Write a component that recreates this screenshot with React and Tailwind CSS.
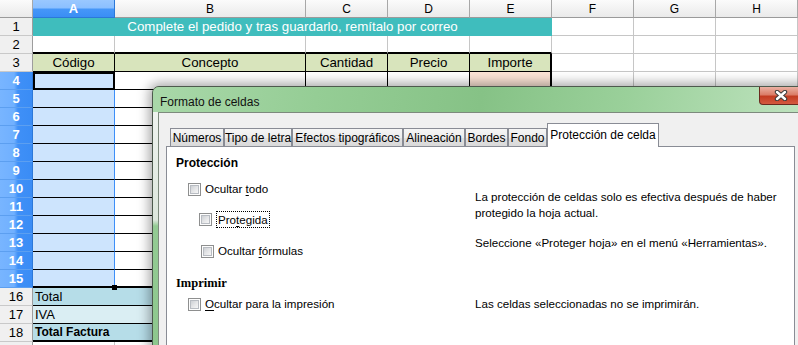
import React from 'react';

const grid = 'h-full shrink-0 border-r border-b border-[#c6c6c6] bg-white';
const g82 = 'w-[82px] ' + grid;
const g191 = 'w-[191px] ' + grid;
const hdrCell = 'w-[82px] h-full shrink-0 flex items-center justify-center border-r border-b border-r-[#a8a8a8] border-b-[#9a9a9a] bg-[linear-gradient(to_bottom,#fbfbfb,#eaeaea)]';

function RowNum({ n, on }) {
  if (on) {
    return (
      <div className="w-[33px] h-full shrink-0 flex items-center justify-center border-r border-b border-r-[#2c78d8] border-b-[#5c9ff0] bg-[linear-gradient(to_right,#78b5ff_0%,#70b0ff_44%,#3f90f7_56%,#3a8cf5_100%)] text-white font-bold text-[13px]">
        {n}
      </div>
    );
  }
  return (
    <div className="w-[33px] h-full shrink-0 flex items-center justify-center border-r border-b border-r-[#9d9d9d] border-b-[#c9c9c9] bg-[#f0f0f0] text-[13px] text-black">
      {n}
    </div>
  );
}

function Tail() {
  return (
    <>
      <div className={g82} />
      <div className={g82} />
      <div className={g82} />
    </>
  );
}

function SelRow({ n, last }) {
  const a = last
    ? 'w-[82px] h-full shrink-0 bg-[#cde4fd] border-r border-r-[#3d8ff8] border-b-2 border-b-black'
    : 'w-[82px] h-full shrink-0 bg-[#cde4fd] border-r border-r-[#3d8ff8] border-b border-b-black';
  const b = last
    ? 'w-[191px] h-full shrink-0 bg-white border-r border-r-[#c6c6c6] border-b-2 border-b-black'
    : 'w-[191px] h-full shrink-0 bg-white border-r border-r-[#c6c6c6] border-b border-b-black';
  return (
    <div className="flex h-[18px]">
      <RowNum n={n} on />
      <div className={a} />
      <div className={b} />
      <div className={g82} />
      <div className={g82} />
      <div className={g82} />
      <Tail />
    </div>
  );
}

function Check() {
  return (
    <span className="w-[13px] h-[13px] shrink-0 flex border border-[#8e8f8f] bg-[#fdfdfd] p-[1px]">
      <span className="flex-1 border border-[#b8bcc2] bg-[linear-gradient(135deg,#cdd0d4_0%,#e4e5e7_50%,#f6f6f6_100%)]" />
    </span>
  );
}

function TabBtn({ w, children }) {
  return (
    <div className={w + ' h-[19px] shrink-0 flex items-center justify-center border border-b-0 border-[#898c95] bg-[linear-gradient(to_bottom,#f5f5f5_0%,#ececec_50%,#e0e0e0_51%,#d9d9d9_100%)] whitespace-nowrap text-[12px] text-black leading-none'}>
      {children}
    </div>
  );
}

export default function App() {
  return (
    <div className="relative w-[798px] h-[345px] overflow-hidden bg-white font-['Liberation_Sans',Arial,sans-serif] text-black">
      {/* hoja de cálculo */}
      <div className="flex flex-col">
        <div className="flex h-[18px] text-[12px]">
          <div className="w-[33px] h-full shrink-0 border-r border-b border-r-[#a8a8a8] border-b-[#9a9a9a] bg-[linear-gradient(to_bottom,#fbfbfb,#eaeaea)]" />
          <div className="w-[82px] h-full shrink-0 flex items-center justify-center border-r border-b border-r-[#2c78d8] border-b-[#2c78d8] bg-[linear-gradient(to_bottom,#9ac8ff_0%,#8cc0ff_45%,#4596f8_55%,#3a8ef5_100%)] text-white font-bold text-[13px]">A</div>
          <div className={'w-[191px] h-full shrink-0 flex items-center justify-center border-r border-b border-r-[#a8a8a8] border-b-[#9a9a9a] bg-[linear-gradient(to_bottom,#fbfbfb,#eaeaea)]'}>B</div>
          <div className={hdrCell}>C</div>
          <div className={hdrCell}>D</div>
          <div className={hdrCell}>E</div>
          <div className={hdrCell}>F</div>
          <div className={hdrCell}>G</div>
          <div className={hdrCell}>H</div>
        </div>

        <div className="flex h-[18px]">
          <RowNum n={1} />
          <div className="w-[519px] h-full shrink-0 flex items-center justify-center bg-[#3fbdbd] text-white text-[13.3px]">
            Complete el pedido y tras guardarlo, remítalo por correo
          </div>
          <Tail />
        </div>

        <div className="flex h-[18px]">
          <RowNum n={2} />
          <div className="w-[82px] h-full shrink-0 bg-white border-r border-r-[#c6c6c6] border-b-2 border-b-black" />
          <div className="w-[191px] h-full shrink-0 bg-white border-r border-r-[#c6c6c6] border-b-2 border-b-black" />
          <div className="w-[82px] h-full shrink-0 bg-white border-r border-r-[#c6c6c6] border-b-2 border-b-black" />
          <div className="w-[82px] h-full shrink-0 bg-white border-r border-r-[#c6c6c6] border-b-2 border-b-black" />
          <div className="w-[82px] h-full shrink-0 bg-white border-r border-r-[#c6c6c6] border-b-2 border-b-black" />
          <Tail />
        </div>

        <div className="flex h-[18px] text-[13.3px]">
          <RowNum n={3} />
          <div className="w-[82px] h-full shrink-0 flex items-center justify-center bg-[#d8e4bc] border-r border-b border-black">Código</div>
          <div className="w-[191px] h-full shrink-0 flex items-center justify-center bg-[#d8e4bc] border-r border-b border-black">Concepto</div>
          <div className="w-[82px] h-full shrink-0 flex items-center justify-center bg-[#d8e4bc] border-r border-b border-black">Cantidad</div>
          <div className="w-[82px] h-full shrink-0 flex items-center justify-center bg-[#d8e4bc] border-r border-b border-black">Precio</div>
          <div className="w-[82px] h-full shrink-0 flex items-center justify-center bg-[#d8e4bc] border-r-2 border-b border-black">Importe</div>
          <Tail />
        </div>

        <div className="flex h-[18px]">
          <RowNum n={4} on />
          <div className="w-[82px] h-full shrink-0 bg-[#cde4fd] border-2 border-black" />
          <div className="w-[191px] h-full shrink-0 bg-white border-r border-b border-black" />
          <div className="w-[82px] h-full shrink-0 bg-white border-r border-r-black border-b border-b-[#c6c6c6]" />
          <div className="w-[82px] h-full shrink-0 bg-white border-r border-r-black border-b border-b-[#c6c6c6]" />
          <div className="w-[82px] h-full shrink-0 bg-[#fce4d6] border-r-2 border-r-black border-b border-b-[#c6c6c6]" />
          <Tail />
        </div>

        {[5, 6, 7, 8, 9, 10, 11, 12, 13, 14].map((n) => (
          <SelRow key={n} n={n} />
        ))}
        <SelRow n={15} last />

        <div className="relative flex h-[18px] text-[13px]">
          <RowNum n={16} />
          <div className="w-[273px] h-full shrink-0 flex items-center pl-[2px] bg-[#b6dde8] border-b border-b-black">Total</div>
          <div className={g82} />
          <div className={g82} />
          <div className={g82} />
          <Tail />
          <span className="absolute left-[112px] top-[-3px] w-[5px] h-[5px] bg-black" />
        </div>
        <div className="flex h-[18px] text-[13px]">
          <RowNum n={17} />
          <div className="w-[273px] h-full shrink-0 flex items-center pl-[2px] bg-[#daeef3] border-b border-b-black">IVA</div>
          <div className={g82} />
          <div className={g82} />
          <div className={g82} />
          <Tail />
        </div>
        <div className="flex h-[18px] text-[13px]">
          <RowNum n={18} />
          <div className="w-[273px] h-full shrink-0 flex items-center pl-[2px] bg-[#b6dde8] border-b-2 border-b-black font-bold text-[12px]">Total Factura</div>
          <div className={g82} />
          <div className={g82} />
          <div className={g82} />
          <Tail />
        </div>
        <div className="flex h-[18px]">
          <RowNum n="" />
          <div className={g82} />
          <div className={g191} />
          <div className={g82} />
          <div className={g82} />
          <div className={g82} />
          <Tail />
        </div>
      </div>

      {/* diálogo Formato de celdas */}
      <div className="absolute left-[152px] top-[86px] w-[658px] h-[290px] flex flex-col rounded-tl-[7px] border border-[#4d5a4d] bg-[#8ec88e] shadow-[0_0_12px_3px_rgba(0,0,0,0.35)] overflow-hidden">
        <div className="h-[25px] shrink-0 flex items-start justify-between bg-[linear-gradient(100deg,#a9d8a9_0%,#95cd95_25%,#86c286_50%,#9ad09a_72%,#bfe3bf_100%)]">
          <div className="pl-[7px] pt-[7px] leading-[16px] text-[12px] text-[#111]">Formato de celdas</div>
          <div className="mr-[7px] w-[43px] h-[18px] flex items-center justify-center rounded-b-[4px] border border-t-0 border-[#6b2a1e] bg-[linear-gradient(to_bottom,#eab1a3_0%,#db7d68_45%,#c33c22_55%,#d45a3f_100%)]">
            <svg width="14" height="11" viewBox="0 0 14 11">
              <path d="M3 2 L11 9 M11 2 L3 9" stroke="#3b3b3b" strokeWidth="4.4" strokeLinecap="round" fill="none" />
              <path d="M3 2 L11 9 M11 2 L3 9" stroke="#ffffff" strokeWidth="2.4" strokeLinecap="round" fill="none" />
            </svg>
          </div>
        </div>
        <div className="flex flex-1">
          <div className="w-[5px] shrink-0 bg-[linear-gradient(to_bottom,#eef3ee_0px,#dde7dd_108px,#93cb93_114px,#8ac58a_100%)]" />
          <div className="flex-1 bg-[#f0f0f0] border-l border-t border-[#7d8a7d] pt-[10px]">
            <div className="ml-[7px]">
              <div className="flex items-end h-[24px] pl-[4px]">
                <TabBtn w="w-[54px]">Números</TabBtn>
                <TabBtn w="w-[68px]">Tipo de letra</TabBtn>
                <TabBtn w="w-[111px]">Efectos tipográficos</TabBtn>
                <TabBtn w="w-[62px]">Alineación</TabBtn>
                <TabBtn w="w-[43px]">Bordes</TabBtn>
                <TabBtn w="w-[39px]">Fondo</TabBtn>
                <div className="relative z-10 w-[112px] h-[24px] shrink-0 flex justify-center pt-[4px] border border-b-0 border-[#898c95] bg-white whitespace-nowrap text-[12px] leading-[14px]">
                  Protección de celda
                </div>
              </div>
              <div className="relative -mt-px w-[629px] h-[260px] border border-[#898c95] bg-white text-[11.6px]">
                <div className="mt-[8px] pl-[9px] h-[16px] leading-[16px] font-bold text-[12px]">Protección</div>
                <div className="flex">
                  <div className="w-[308px] shrink-0">
                    <div className="mt-[10px] h-[16px] flex items-center ml-[21px] gap-[4px]">
                      <Check />
                      <span className="leading-[16px]">Ocultar <span className="underline underline-offset-2">t</span>odo</span>
                    </div>
                    <div className="mt-[14px] h-[16px] flex items-center ml-[32px] gap-[4px]">
                      <Check />
                      <span className="border border-dotted border-black px-[1px] leading-[15px]">Pro<span className="underline underline-offset-2">t</span>egida</span>
                    </div>
                    <div className="mt-[16px] h-[16px] flex items-center ml-[34px] gap-[4px]">
                      <Check />
                      <span className="leading-[16px]">Ocultar <span className="underline underline-offset-2">f</span>órmulas</span>
                    </div>
                  </div>
                  <div className="leading-[16px]">
                    <p className="mt-[18px]">
                      La protección de celdas solo es efectiva después de haber
                      <br />
                      protegido la hoja actual.
                    </p>
                    <p className="mt-[14px]">Seleccione «Proteger hoja» en el menú «Herramientas».</p>
                  </div>
                </div>
                <div className="mt-[16px] pl-[9px] h-[16px] leading-[16px] font-bold font-['Liberation_Serif',serif] text-[12.5px]">Imprimir</div>
                <div className="mt-[5px] flex h-[16px] items-center">
                  <div className="w-[308px] shrink-0 flex items-center ml-[21px] gap-[4px]">
                    <Check />
                    <span className="leading-[16px]"><span className="underline underline-offset-2">O</span>cultar para la impresión</span>
                  </div>
                  <div className="-ml-[21px] leading-[16px]">Las celdas seleccionadas no se imprimirán.</div>
                </div>
              </div>
            </div>
          </div>
        </div>
      </div>
    </div>
  );
}
